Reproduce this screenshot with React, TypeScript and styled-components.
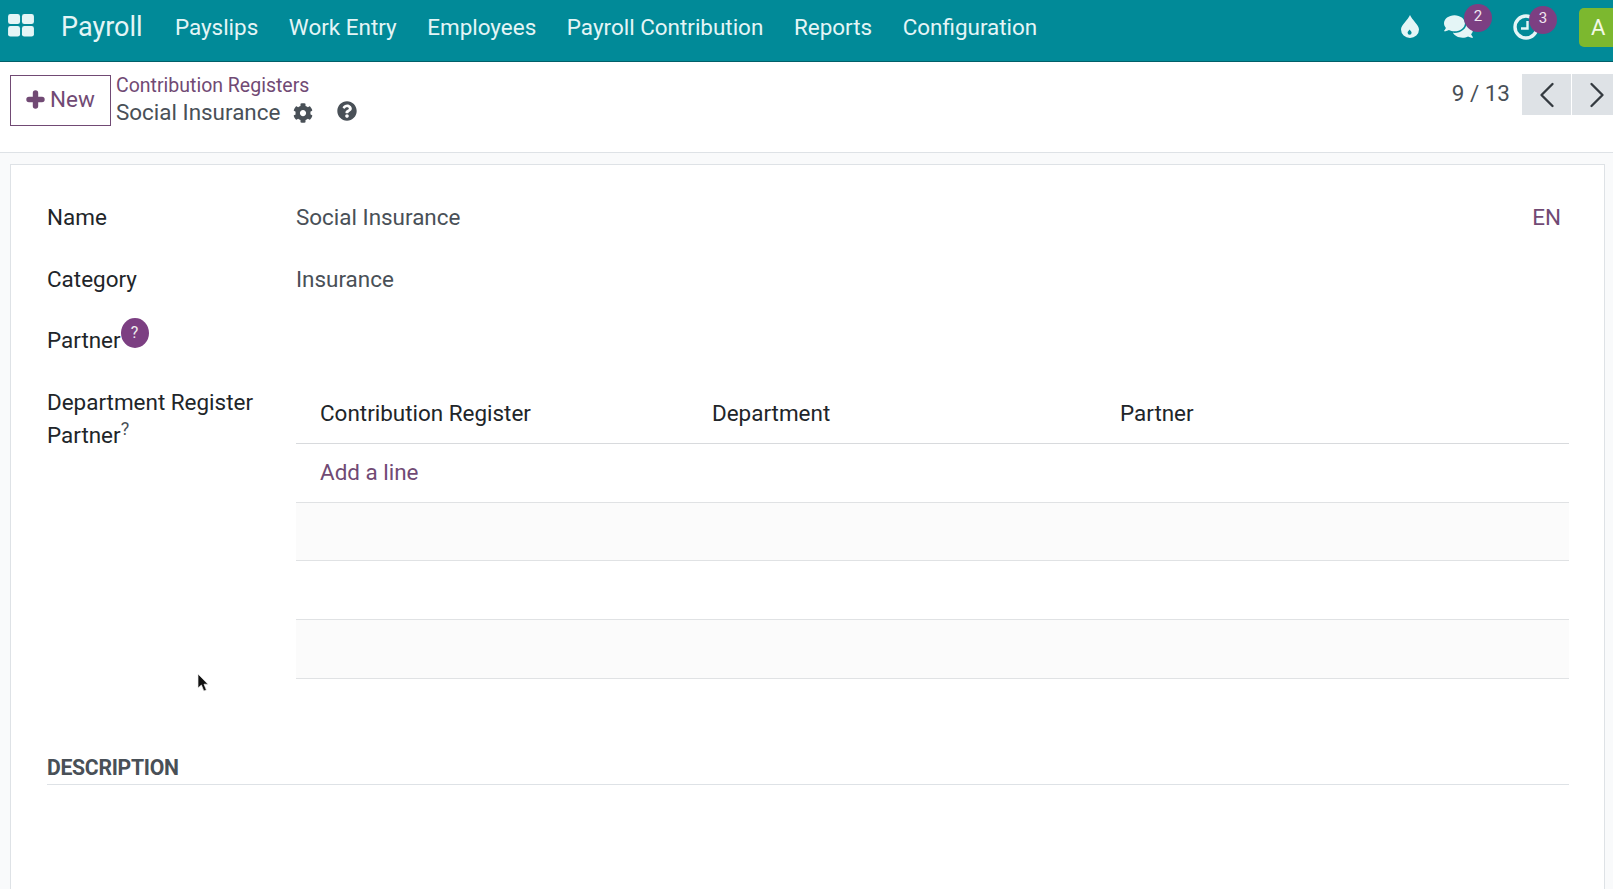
import styled, {createGlobalStyle} from 'styled-components'
import {ReactNode} from 'react'
import {FaCog, FaComments, FaQuestionCircle} from 'react-icons/fa'
import {ChevronLeft, ChevronRight} from 'lucide-react'

const purple = '#714a74'
const badgePurple = '#7c3f82'
const navText = '#e4f5f6'
const navBg = '#018a98'

const GlobalStyle = createGlobalStyle`
  html, body {
    margin: 0;
    height: 100%;
    overflow: hidden;
    background: #f9fafb;
    font-family: Roboto, "Noto Sans", sans-serif;
    font-size: 22.45px;
    line-height: 33px;
    color: #212529;
  }
`

const Page = styled.div`
  position: relative;
  display: flex;
  flex-direction: column;
  height: 889px;
  overflow: hidden;
`

// navbar
const NavBar = styled.header`
  display: flex;
  align-items: center;
  flex: 0 0 62px;
  box-sizing: border-box;
  height: 62px;
  background: ${navBg};
  border-bottom: 1px solid #015f69;
  color: ${navText};
`

const AppsIcon = styled.svg`
  width: 26px;
  height: 23px;
  margin: -11px 0 0 8px;
`

const Brand = styled.div`
  margin: -7px 17px 0 27px;
  font-size: 27px;
`

const NavItem = styled.a`
  margin-top: -7px;
  padding: 0 15.3px;
  white-space: nowrap;
`

const NavRight = styled.div`
  display: flex;
  align-items: center;
  margin-left: auto;
  height: 100%;
`

const SysIcon = styled.div<{$width: number}>`
  position: relative;
  display: flex;
  justify-content: center;
  width: ${p => p.$width}px;
  margin-top: -8px;
`

const Badge = styled.span<{$right: number}>`
  position: absolute;
  top: -8px;
  right: ${p => p.$right}px;
  width: 28px;
  height: 28px;
  border-radius: 50%;
  background: ${badgePurple};
  color: #f0e6f0;
  font-size: 15px;
  line-height: 24px;
  text-align: center;
`

const Avatar = styled.div`
  display: flex;
  align-items: center;
  width: 44px;
  height: 39px;
  margin: -7px -10px 0 17px;
  padding-left: 12px;
  box-sizing: border-box;
  background: #7cb82f;
  border-radius: 5px 0 0 5px;
  color: #f3f9e6;
  font-size: 22px;
`

// control panel
const ControlPanel = styled.div`
  display: flex;
  flex: 0 0 91px;
  box-sizing: border-box;
  height: 91px;
  padding: 13px 0 0 10px;
  background: #fff;
  border-bottom: 1px solid #dee2e6;
  overflow: hidden;
`

const NewButton = styled.button`
  display: flex;
  align-items: center;
  justify-content: center;
  gap: 5px;
  width: 101px;
  height: 51px;
  padding: 0 0 2px 0;
  background: #fff;
  border: 1px solid ${purple};
  color: ${purple};
  font: inherit;
`

const Crumbs = styled.div`
  margin-left: 5px;
`

const CrumbLink = styled.div`
  margin-top: -4px;
  font-size: 19.5px;
  line-height: 30px;
  color: ${purple};
`

const CrumbCurrent = styled.div`
  display: flex;
  align-items: center;
  margin-top: -5px;
  color: #495057;
`

const GearIcon = styled(FaCog)`
  margin-left: 13px;
  font-size: 20px;
`

const HelpIcon = styled(FaQuestionCircle)`
  margin: -3px 0 0 24px;
  font-size: 20px;
  color: #495057;
`

const Pager = styled.div`
  display: flex;
  margin-left: auto;
  margin-right: -9px;
  align-items: flex-start;
  height: 41px;
  margin-top: -1px;
`

const PagerText = styled.div`
  margin-right: 12px;
  line-height: 39px;
  color: #495057;
`

const PagerButton = styled.button`
  display: flex;
  align-items: center;
  justify-content: center;
  width: 49px;
  height: 41px;
  margin-right: 1px;
  padding: 0;
  background: #dee2e6;
  border: 0;
  color: #343a40;
`

const Content = styled.main`
  flex: 1;
  padding: 11px 8px 0 10px;
`

const Sheet = styled.section`
  box-sizing: border-box;
  height: 100%;
  padding: 36px 35px 0 36px;
  background: #fff;
  border: 1px solid #dee2e6;
  border-bottom: 0;
`

const FieldRow = styled.div`
  display: flex;
  min-height: 33px;
  margin-bottom: 28.6px;
`

const Label = styled.div`
  flex: 0 0 249px;
  white-space: pre-line;
`

const Value = styled.div`
  flex: 1;
  color: #495057;
`

const Lang = styled.span`
  margin-right: 8px;
  color: ${purple};
`

const Hint = styled.span`
  display: inline-block;
  position: relative;
  top: -9px;
  width: 28px;
  height: 30px;
  border-radius: 50%;
  background: ${badgePurple};
  color: #eee;
  font-size: 16px;
  line-height: 29px;
  text-align: center;
  vertical-align: middle;
`

const PlainHint = styled.sup`
  font-size: 18px;
  line-height: 0;
  color: #495057;
`

const Lines = styled.div`
  flex: 1;
  margin: 0.2px 0 45.4px;
`

const LineRow = styled.div<{$shaded?: boolean; $head?: boolean}>`
  display: grid;
  grid-template-columns: 392px 408px 1fr;
  box-sizing: border-box;
  height: ${p => (p.$head ? 58 : 58.7)}px;
  padding: ${p => (p.$head ? '0 0 2px 24px' : '0 0 0 24px')};
  background: ${p => (p.$shaded ? '#fbfbfb' : '#fff')};
  border-bottom: 1px solid ${p => (p.$head ? '#d8dadd' : '#e0e2e4')};
  align-items: center;
`

const AddLine = styled.a`
  color: ${purple};
`

const SectionTitle = styled.div`
  box-sizing: border-box;
  padding-bottom: 2px;
  border-bottom: 1px solid #dee2e6;
  font-size: 21.2px;
  line-height: 29px;
  font-weight: 700;
  letter-spacing: -0.3px;
  color: #495057;
`

const Cursor = styled.svg`
  position: absolute;
  left: 197px;
  top: 673px;
  width: 13px;
  height: 20px;
`

function GridLogo(): JSX.Element {
  return (
    <AppsIcon viewBox="0 0 27 24">
      <rect x="0" y="0" width="12.5" height="10.5" rx="2.5" fill={navText} />
      <rect x="14.5" y="0" width="12.5" height="10.5" rx="2.5" fill={navText} />
      <rect x="0" y="12.5" width="12.5" height="11" rx="2.5" fill={navText} />
      <rect x="14.5" y="12.5" width="12.5" height="11" rx="2.5" fill={navText} />
    </AppsIcon>
  )
}

function DropIcon(): JSX.Element {
  return (
    <svg width="18" height="23" viewBox="0 0 18 23">
      <path d="M9 0C11 5 18 10 18 14.5a9 8.5 0 0 1-18 0C0 10 7 5 9 0Z" fill={navText} />
      <path d="M8.6 14.5c.5 1.2 2 2 2 3.2a2 2 0 0 1-4 0c0-1.2 1.5-2 2-3.2Z" fill={navBg} />
    </svg>
  )
}

function ActivityIcon(): JSX.Element {
  return (
    <svg width="26" height="26" viewBox="0 0 26 26" fill="none" stroke={navText}>
      <circle cx="13" cy="13" r="11" strokeWidth="3.4" />
      <path d="M14.5 7v7.5H8" strokeWidth="2.4" />
    </svg>
  )
}

function PlusIcon(): JSX.Element {
  return (
    <svg width="19" height="19" viewBox="0 0 19 19" fill="none" stroke={purple} strokeWidth="5.4" strokeLinecap="round">
      <path d="M9.5 3v13M3 9.5h13" />
    </svg>
  )
}

function SystrayIcon(props: {width: number; badge?: string; badgeRight?: number; children: ReactNode}): JSX.Element {
  return (
    <SysIcon $width={props.width}>
      {props.children}
      {props.badge && <Badge $right={props.badgeRight ?? 0}>{props.badge}</Badge>}
    </SysIcon>
  )
}

const menu = ['Payslips', 'Work Entry', 'Employees', 'Payroll Contribution', 'Reports', 'Configuration']

export default function App(): JSX.Element {
  return (
    <Page>
      <GlobalStyle />
      <NavBar>
        <GridLogo />
        <Brand>Payroll</Brand>
        {menu.map(item => <NavItem key={item}>{item}</NavItem>)}
        <NavRight>
          <SystrayIcon width={32}><DropIcon /></SystrayIcon>
          <SystrayIcon width={64} badge="2" badgeRight={-2}><FaComments size={29} /></SystrayIcon>
          <SystrayIcon width={72} badge="3" badgeRight={5}><ActivityIcon /></SystrayIcon>
          <Avatar>A</Avatar>
        </NavRight>
      </NavBar>

      <ControlPanel>
        <NewButton><PlusIcon />New</NewButton>
        <Crumbs>
          <CrumbLink>Contribution Registers</CrumbLink>
          <CrumbCurrent>
            Social Insurance
            <GearIcon />
            <HelpIcon />
          </CrumbCurrent>
        </Crumbs>
        <Pager>
          <PagerText>9 / 13</PagerText>
          <PagerButton><ChevronLeft size={44} strokeWidth={1.3} /></PagerButton>
          <PagerButton><ChevronRight size={44} strokeWidth={1.3} /></PagerButton>
        </Pager>
      </ControlPanel>

      <Content>
        <Sheet>
          <FieldRow>
            <Label>Name</Label>
            <Value>Social Insurance</Value>
            <Lang>EN</Lang>
          </FieldRow>
          <FieldRow>
            <Label>Category</Label>
            <Value>Insurance</Value>
          </FieldRow>
          <FieldRow>
            <Label>Partner<Hint>?</Hint></Label>
          </FieldRow>
          <FieldRow>
            <Label>Department Register{'\n'}Partner<PlainHint>?</PlainHint></Label>
            <Lines>
              <LineRow $head>
                <span>Contribution Register</span>
                <span>Department</span>
                <span>Partner</span>
              </LineRow>
              <LineRow><AddLine>Add a line</AddLine></LineRow>
              <LineRow $shaded />
              <LineRow />
              <LineRow $shaded />
            </Lines>
          </FieldRow>
          <SectionTitle>DESCRIPTION</SectionTitle>
        </Sheet>
      </Content>

      <Cursor viewBox="0 0 13 20">
        <path d="M1 1v14l3.4-3 2.4 6 2.6-1-2.4-5.8H11z" fill="#111" stroke="#eee" strokeWidth=".7" />
      </Cursor>
    </Page>
  )
}
